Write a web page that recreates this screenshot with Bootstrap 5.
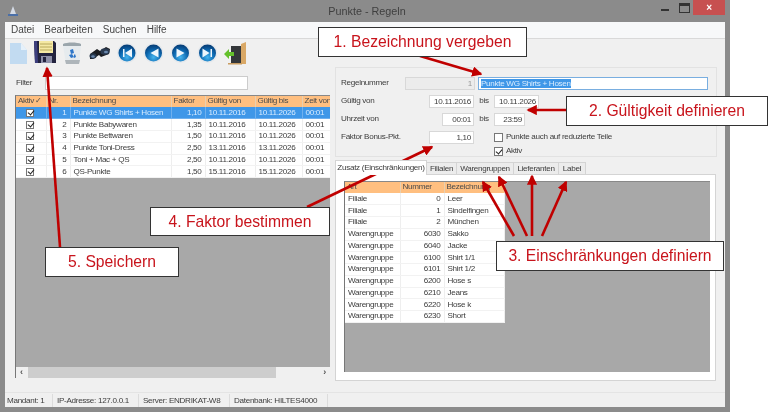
<!DOCTYPE html>
<html lang="de">
<head>
    <meta charset="UTF-8">
    <meta name="viewport" content="width=device-width, initial-scale=1.0">
    <title>Punkte - Regeln</title>
    <link href="https://cdn.jsdelivr.net/npm/bootstrap@5.3.0/dist/css/bootstrap.min.css" rel="stylesheet">
    <style>
        html, body { margin: 0; height: 412px; overflow: hidden; background: #fff; }
        body { font-family: "Liberation Sans", Arial, sans-serif; font-size: 8.1px; letter-spacing: -.3px; color: #3c3c3c; line-height: 1; }
        .shot { position: relative; width: 768px; height: 412px; filter: blur(.35px); }
        .win { width: 730px; height: 412px; background: #8b8b8b; padding: 0 5px 5px; }
        .win-title { height: 22px; position: relative; }
        .win-title-text { font-size: 10.8px; letter-spacing: 0; color: #3f3f3f; padding: 6px 0 0 4px; text-align: center; width: 720px; }
        .win-ico { position: absolute; left: 3px; top: 6px; }
        .win-btns { position: absolute; right: 0; top: 0; height: 15px; }
        .win-min { width: 8px; height: 2px; background: #333; margin: 9px 10px 0 0; }
        .win-max { width: 11px; height: 10px; border: 1px solid #333; border-top-width: 3px; margin: 3px 3px 0 0; }
        .win-close { width: 32px; height: 15px; background: #c75050; color: #fff; font-size: 10px; font-weight: bold; text-align: center; line-height: 15px; }
        .win-body { height: 385px; background: #f0f0f0; }
        .menu-bar { height: 16px; background: #f7f8f9; font-size: 10px; letter-spacing: 0; color: #444; padding: 3px 0 0 6px; gap: 10px; }
        .tool-bar { height: 29px; padding: 2px 0 0 4px; gap: 5px; border-top: 1px solid #d9d9d9; }
        .tool-bar svg { display: block; flex: none; }
        .ico-doc { width: 19px; height: 24px; }
        .ico-save { width: 24px; height: 23px; }
        .ico-bin { width: 20px; height: 24px; }
        .ico-find { width: 25px; height: 24px; }
        .ico-nav { width: 102px; height: 24px; }
        .ico-exit { width: 23px; height: 24px; }
        .panes { height: 315px; flex: none; }
        .pane-left { width: 325px; padding: 0 0 0 10px; }
        .pane-right { width: 390px; margin-left: 5px; }
        .filter-row { margin-top: 9px; margin-bottom: 5px; padding-left: 1px; }
        .filter-lbl { width: 29px; padding-top: 3px; }
        .filter-box { width: 203px; height: 14px; background: #fff; border: 1px solid #ccc; }
        .grid-area { background: #a8a8a8; border-left: 1px solid #777; border-top: 1px solid #888; position: relative; }
        .grid-left { width: 315px; height: 283px; overflow: hidden; }
        .grid-tbl { border-collapse: collapse; table-layout: fixed; background: #fff; color: #3c3c3c; margin: 0; }
        .tbl-regeln { width: 314px; }
        .tbl-zusatz { width: 159px; }
        .col-aktiv { width: 30px; }
        .col-nr { width: 24px; }
        .col-bez { width: 101px; }
        .col-fak { width: 34px; }
        .col-von { width: 50px; }
        .col-bis { width: 47px; }
        .col-zeit { width: 28px; }
        .col-art { width: 55px; }
        .col-nummer { width: 44px; }
        .col-name { width: 60px; }
        .grid-tbl th { background: #ffbf80; font-weight: normal; height: 11px; padding: 0 2px; border-right: 1px solid #e8d0b0; white-space: nowrap; overflow: hidden; color: #4a4a4a; }
        .grid-tbl td { height: 11.75px; padding: 0 3px; border-right: 1px solid #eee; border-bottom: 1px solid #f2f2f2; white-space: nowrap; overflow: hidden; }
        .grid-tbl tr.sel td { background: #3f97e8; color: #d8ecff; border-color: #6fb0ee; }
        .cell-num { text-align: right; }
        .sort-tick { margin-left: 1px; }
        .chk-ico { display: block; flex: none; width: 9px; height: 9px; border: 1px solid #777; background: #fff; position: relative; }
        .chk-ico::after { content: ""; position: absolute; left: 2px; top: 0; width: 4px; height: 6px; border: solid #222; border-width: 0 1.5px 1.5px 0; transform: rotate(40deg); }
        .chk-off::after { display: none; }
        .chk-grid { width: 8px; height: 8px; margin-left: 7px; }
        .chk-grid::after { left: 1.5px; top: -.5px; }
        .chk-a { margin: 0 3px 0 20px; }
        .chk-b { margin: 0 3px 0 153px; }
        .hscroll { position: absolute; left: 0; right: 0; bottom: 0; height: 11px; background: #f0f0f0; color: #555; }
        .hscroll-thumb { position: absolute; left: 12px; top: 0; width: 248px; height: 11px; background: #cdcdcd; }
        .hscroll-l, .hscroll-r { position: absolute; top: 1px; font-size: 9px; font-weight: bold; }
        .hscroll-l { left: 4px; }
        .hscroll-r { right: 4px; }
        .rule-box { width: 382px; height: 90px; border: 1px solid #e2e2e2; padding: 9px 0 0 5px; }
        .f-row { height: 13px; margin-bottom: 5px; }
        .f-row-tight { margin-bottom: 1px; }
        .f-lbl { flex: none; }
        .lbl-59 { width: 64px; }
        .lbl-88 { width: 88px; }
        .lbl-101 { width: 101px; }
        .f-in { flex: none; height: 13px; background: #fff; border: 1px solid #d8d8d8; padding: 0 2px; text-align: right; line-height: 11px; }
        .w-70 { width: 70px; }
        .w-45 { width: 45px; }
        .w-32 { width: 32px; }
        .w-31 { width: 31px; }
        .f-off { background: #ececec; color: #999; }
        .f-name { border: 1px solid #79aee0; text-align: left; margin-left: 3px; width: 230px; }
        .f-name span { background: #3f97e8; color: #d8ecff; }
        .f-bis { width: 20px; flex: none; text-align: center; }
        .tab-strip { height: 18px; margin-top: 0; align-items: flex-end; position: relative; z-index: 1; margin-bottom: -1px; }
        .tab-item { height: 13px; background: #ececec; border: 1px solid #d4d4d4; border-left: 0; padding-top: 2px; text-align: center; white-space: nowrap; flex: none; }
        .tab-on { height: 15px; background: #fff; border-left: 1px solid #d4d4d4; border-bottom: 0; padding-top: 3px; }
        .tw-92 { width: 92px; }
        .tw-30 { width: 30px; }
        .tw-57 { width: 57px; }
        .tw-45 { width: 45px; }
        .tw-27 { width: 27px; }
        .tab-body { width: 381px; height: 207px; background: #fff; border: 1px solid #d4d4d4; padding: 6px 5px 0 8px; }
        .grid-right { height: 191px; }
        .status-bar { height: 15px; flex: none; border-top: 1px solid #e4e4e4; background: #f0f0f0; padding-top: 1px; margin-top: 10px; }
        .status-item { padding: 3px 0 0 2px; border-right: 1px solid #dcdcdc; height: 13px; white-space: nowrap; flex: none; }
        .st-48 { width: 48px; }
        .st-86 { width: 86px; padding-left: 4px; }
        .st-91 { width: 91px; padding-left: 4px; }
        .st-98 { width: 98px; padding-left: 4px; }
        .note-layer { position: absolute; left: 0; top: 0; }
        .note-box { position: absolute; background: #fff; border: 1.5px solid #333; color: #c8141c; font-size: 15.7px; letter-spacing: 0; display: flex; align-items: center; justify-content: center; white-space: nowrap; }
        .note-1 { left: 318px; top: 27px; width: 209px; height: 30px; }
        .note-2 { left: 566px; top: 96px; width: 202px; height: 30px; }
        .note-3 { left: 496px; top: 241px; width: 228px; height: 30px; }
        .note-4 { left: 150px; top: 207px; width: 180px; height: 29px; }
        .note-5 { left: 45px; top: 247px; width: 134px; height: 30px; }
    </style>
</head>
<body>
<div class="shot">
    <div class="win">
        <div class="win-title">
            <svg class="win-ico" width="10" height="11" viewBox="0 0 10 11"><path d="M5 0 8 8H2z" fill="#d5dbe6"/><path d="M0 8h10v2H0z" fill="#4a6fa8"/></svg>
            <div class="win-title-text">Punkte - Regeln</div>
            <div class="win-btns d-flex">
                <div class="win-min"></div>
                <div class="win-max"></div>
                <div class="win-close">×</div>
            </div>
        </div>
        <div class="win-body d-flex flex-column">
            <div class="menu-bar d-flex">
                <span>Datei</span><span>Bearbeiten</span><span>Suchen</span><span>Hilfe</span>
            </div>
            <div class="tool-bar d-flex">
                <!-- neu -->
                <svg class="ico-doc" viewBox="0 0 19 24"><path d="M1 2h11l6 7v14H1z" fill="#c2dbf1"/><path d="M12 2v7h6z" fill="#e6f1fa"/></svg>
                <!-- speichern -->
                <svg class="ico-save" viewBox="0 0 24 23"><path d="M1 0h20l2 2v20H2z" fill="#23233f"/><path d="M1 0h3l1 22H2z" fill="#3d3f7e"/><rect x="6" y="0" width="14" height="12" fill="#f5e9a4"/><path d="M7 3h12M7 6h12M7 9h12" stroke="#b8a85c"/><rect x="8" y="15" width="11" height="7" fill="#8d8fa8"/><rect x="10" y="16" width="3" height="5" fill="#23233f"/></svg>
                <!-- papierkorb -->
                <svg class="ico-bin" viewBox="0 0 20 24"><path d="M2 2h16l1 3-2 18H4L1 5z" fill="#e6ebee"/><path d="M1 3c4-2 14-2 18 0v2H1z" fill="#9ba6ac"/><path d="M4 23h13l1-4H3z" fill="#aeb5ba"/><path d="M8 9l3-1 1 4-3 1zM7 14l2 3 3-1-2-3zM13 13l1 3-2 1v-3z" fill="#2f77c9"/></svg>
                <!-- suchen -->
                <svg class="ico-find" viewBox="0 0 25 24"><path d="M3 13 10 8l3 2 6-4 4 2-1 5-8 3-2-2-6 4H3z" fill="#1a1c20"/><ellipse cx="6" cy="15" rx="3.5" ry="2.8" fill="#25364a"/><ellipse cx="18" cy="10.5" rx="4.5" ry="3.2" fill="#2a3a50"/><ellipse cx="6" cy="15.5" rx="1.8" ry="1.2" fill="#6a88ad"/><ellipse cx="19" cy="11" rx="2" ry="1.3" fill="#6a88ad"/></svg>
                <!-- navigation -->
                <svg class="ico-nav" viewBox="0 0 102 24">
                    <defs>
                        <radialGradient id="navBlue" cx=".5" cy=".75" r=".75"><stop offset="0" stop-color="#45b4ee"/><stop offset=".55" stop-color="#0c68b0"/><stop offset="1" stop-color="#063a72"/></radialGradient>
                    </defs>
                    <circle cx="10" cy="12" r="10" fill="#e4e8ec"/><circle cx="10" cy="12" r="8.5" fill="url(#navBlue)"/>
                    <circle cx="36.5" cy="12" r="10" fill="#e4e8ec"/><circle cx="36.5" cy="12" r="8.5" fill="url(#navBlue)"/>
                    <circle cx="63.5" cy="12" r="10" fill="#e4e8ec"/><circle cx="63.5" cy="12" r="8.5" fill="url(#navBlue)"/>
                    <circle cx="90.5" cy="12" r="10" fill="#e4e8ec"/><circle cx="90.5" cy="12" r="8.5" fill="url(#navBlue)"/>
                    <path d="M6 8h1.5v8H6zM15 7.5v9l-7-4.5z" fill="#eef6fc"/>
                    <path d="M41.5 7.5v9l-8-4.5z" fill="#eef6fc"/>
                    <path d="M59.5 7.5v9l8-4.5z" fill="#eef6fc"/>
                    <path d="M85.5 7.5v9l7-4.5zM93.5 8h1.5v8h-1.5z" fill="#eef6fc"/>
                </svg>
                <!-- beenden -->
                <svg class="ico-exit" viewBox="0 0 23 24"><path d="M7 5h10v18H7z" fill="#34373a"/><path d="M17 3l5-2v22h-5z" fill="#d9a866"/><path d="M4 22h14v1.5H4z" fill="#c99c60"/><path d="M0 13l5-5v3h5v4H5v3z" fill="#64c02c"/></svg>
            </div>
            <div class="panes d-flex">
                <div class="pane-left">
                    <div class="filter-row d-flex"><span class="filter-lbl">Filter</span><div class="filter-box"></div></div>
                    <div class="grid-area grid-left">
                        <table class="grid-tbl tbl-regeln" id="tblRegeln">
                            <colgroup><col class="col-aktiv"><col class="col-nr"><col class="col-bez"><col class="col-fak"><col class="col-von"><col class="col-bis"><col class="col-zeit"></colgroup>
                            <thead><tr><th>Aktiv<span class="sort-tick">✓</span></th><th>Nr.</th><th>Bezeichnung</th><th>Faktor</th><th>Gültig von</th><th>Gültig bis</th><th>Zeit von</th></tr></thead>
                            <tbody></tbody>
                        </table>
                        <div class="hscroll">
                            <div class="hscroll-thumb"></div>
                            <span class="hscroll-l">‹</span><span class="hscroll-r">›</span>
                        </div>
                    </div>
                </div>
                <div class="pane-right">
                    <div class="rule-box">
                        <div class="f-row d-flex align-items-center">
                            <span class="f-lbl lbl-59">Regelnummer</span>
                            <div class="f-in f-off w-70">1</div>
                            <div class="f-in f-name"><span>Punkte WG Shirts + Hosen</span></div>
                        </div>
                        <div class="f-row d-flex align-items-center">
                            <span class="f-lbl lbl-88">Gültig von</span>
                            <div class="f-in w-45">10.11.2016</div>
                            <span class="f-bis">bis</span>
                            <div class="f-in w-45">10.11.2026</div>
                        </div>
                        <div class="f-row d-flex align-items-center">
                            <span class="f-lbl lbl-101">Uhrzeit von</span>
                            <div class="f-in w-32">00:01</div>
                            <span class="f-bis">bis</span>
                            <div class="f-in w-31">23:59</div>
                        </div>
                        <div class="f-row f-row-tight d-flex align-items-center">
                            <span class="f-lbl lbl-88">Faktor Bonus-Pkt.</span>
                            <div class="f-in w-45">1,10</div>
                            <span class="chk-ico chk-off chk-a"></span>
                            <span>Punkte auch auf reduzierte Teile</span>
                        </div>
                        <div class="f-row d-flex align-items-center">
                            <span class="chk-ico chk-b"></span>
                            <span>Aktiv</span>
                        </div>
                    </div>
                    <div class="tab-strip d-flex">
                        <div class="tab-item tab-on tw-92">Zusatz (Einschränkungen)</div>
                        <div class="tab-item tw-30">Filialen</div>
                        <div class="tab-item tw-57">Warengruppen</div>
                        <div class="tab-item tw-45">Lieferanten</div>
                        <div class="tab-item tw-27">Label</div>
                    </div>
                    <div class="tab-body">
                        <div class="grid-area grid-right">
                            <table class="grid-tbl tbl-zusatz" id="tblZusatz">
                                <colgroup><col class="col-art"><col class="col-nummer"><col class="col-name"></colgroup>
                                <thead><tr><th>Art</th><th>Nummer</th><th>Bezeichnung</th></tr></thead>
                                <tbody></tbody>
                            </table>
                        </div>
                    </div>
                </div>
            </div>
            <div class="status-bar d-flex">
                <div class="status-item st-48">Mandant: 1</div>
                <div class="status-item st-86">IP-Adresse: 127.0.0.1</div>
                <div class="status-item st-91">Server: ENDRIKAT-W8</div>
                <div class="status-item st-98">Datenbank: HILTES4000</div>
            </div>
        </div>
    </div>

    <svg class="note-layer" width="768" height="412" viewBox="0 0 768 412">
        <defs>
            <marker id="tip" markerWidth="4" markerHeight="4" refX="3.4" refY="2" orient="auto"><path d="M0 0 4 2 0 4z" fill="#c00000"/></marker>
        </defs>
        <g stroke="#c00000" stroke-width="2.6" fill="none">
            <line x1="420" y1="56" x2="481" y2="74" marker-end="url(#tip)"/>
            <line x1="566" y1="110" x2="528" y2="110" marker-end="url(#tip)"/>
            <line x1="514" y1="236" x2="483" y2="182" marker-end="url(#tip)"/>
            <line x1="527" y1="236" x2="499" y2="177" marker-end="url(#tip)"/>
            <line x1="532" y1="236" x2="532" y2="176" marker-end="url(#tip)"/>
            <line x1="542" y1="236" x2="566" y2="182" marker-end="url(#tip)"/>
            <line x1="307" y1="207" x2="432" y2="147" marker-end="url(#tip)"/>
            <line x1="60" y1="247" x2="47" y2="68" marker-end="url(#tip)"/>
        </g>
    </svg>
    <div class="note-box note-1">1. Bezeichnung vergeben</div>
    <div class="note-box note-2">2. Gültigkeit definieren</div>
    <div class="note-box note-3">3. Einschränkungen definiern</div>
    <div class="note-box note-4">4. Faktor bestimmen</div>
    <div class="note-box note-5">5. Speichern</div>
</div>
<script src="https://cdn.jsdelivr.net/npm/bootstrap@5.3.0/dist/js/bootstrap.bundle.min.js"></script>
<script>
    const regeln = [
        [1, 'Punkte WG Shirts + Hosen', '1,10', '10.11.2016', '10.11.2026'],
        [2, 'Punkte Babywaren', '1,35', '10.11.2016', '10.11.2026'],
        [3, 'Punkte Bettwaren', '1,50', '10.11.2016', '10.11.2026'],
        [4, 'Punkte Toni-Dress', '2,50', '13.11.2016', '13.11.2026'],
        [5, 'Toni + Mac + QS', '2,50', '10.11.2016', '10.11.2026'],
        [6, 'QS-Punkte', '1,50', '15.11.2016', '15.11.2026']
    ];
    const zusatz = [
        ['Filiale', 0, 'Leer'], ['Filiale', 1, 'Sindelfingen'], ['Filiale', 2, 'München'],
        ['Warengruppe', 6030, 'Sakko'], ['Warengruppe', 6040, 'Jacke'], ['Warengruppe', 6100, 'Shirt 1/1'],
        ['Warengruppe', 6101, 'Shirt 1/2'], ['Warengruppe', 6200, 'Hose s'], ['Warengruppe', 6210, 'Jeans'],
        ['Warengruppe', 6220, 'Hose k'], ['Warengruppe', 6230, 'Short']
    ];
    document.querySelector('#tblRegeln tbody').innerHTML = regeln.map((r, i) =>
        `<tr class="${i === 0 ? 'sel' : ''}"><td><span class="chk-ico chk-grid"></span></td><td class="cell-num">${r[0]}</td><td>${r[1]}</td><td class="cell-num">${r[2]}</td><td>${r[3]}</td><td>${r[4]}</td><td>00:01</td></tr>`
    ).join('');
    document.querySelector('#tblZusatz tbody').innerHTML = zusatz.map(z =>
        `<tr><td>${z[0]}</td><td class="cell-num">${z[1]}</td><td>${z[2]}</td></tr>`
    ).join('');
</script>
</body>
</html>
